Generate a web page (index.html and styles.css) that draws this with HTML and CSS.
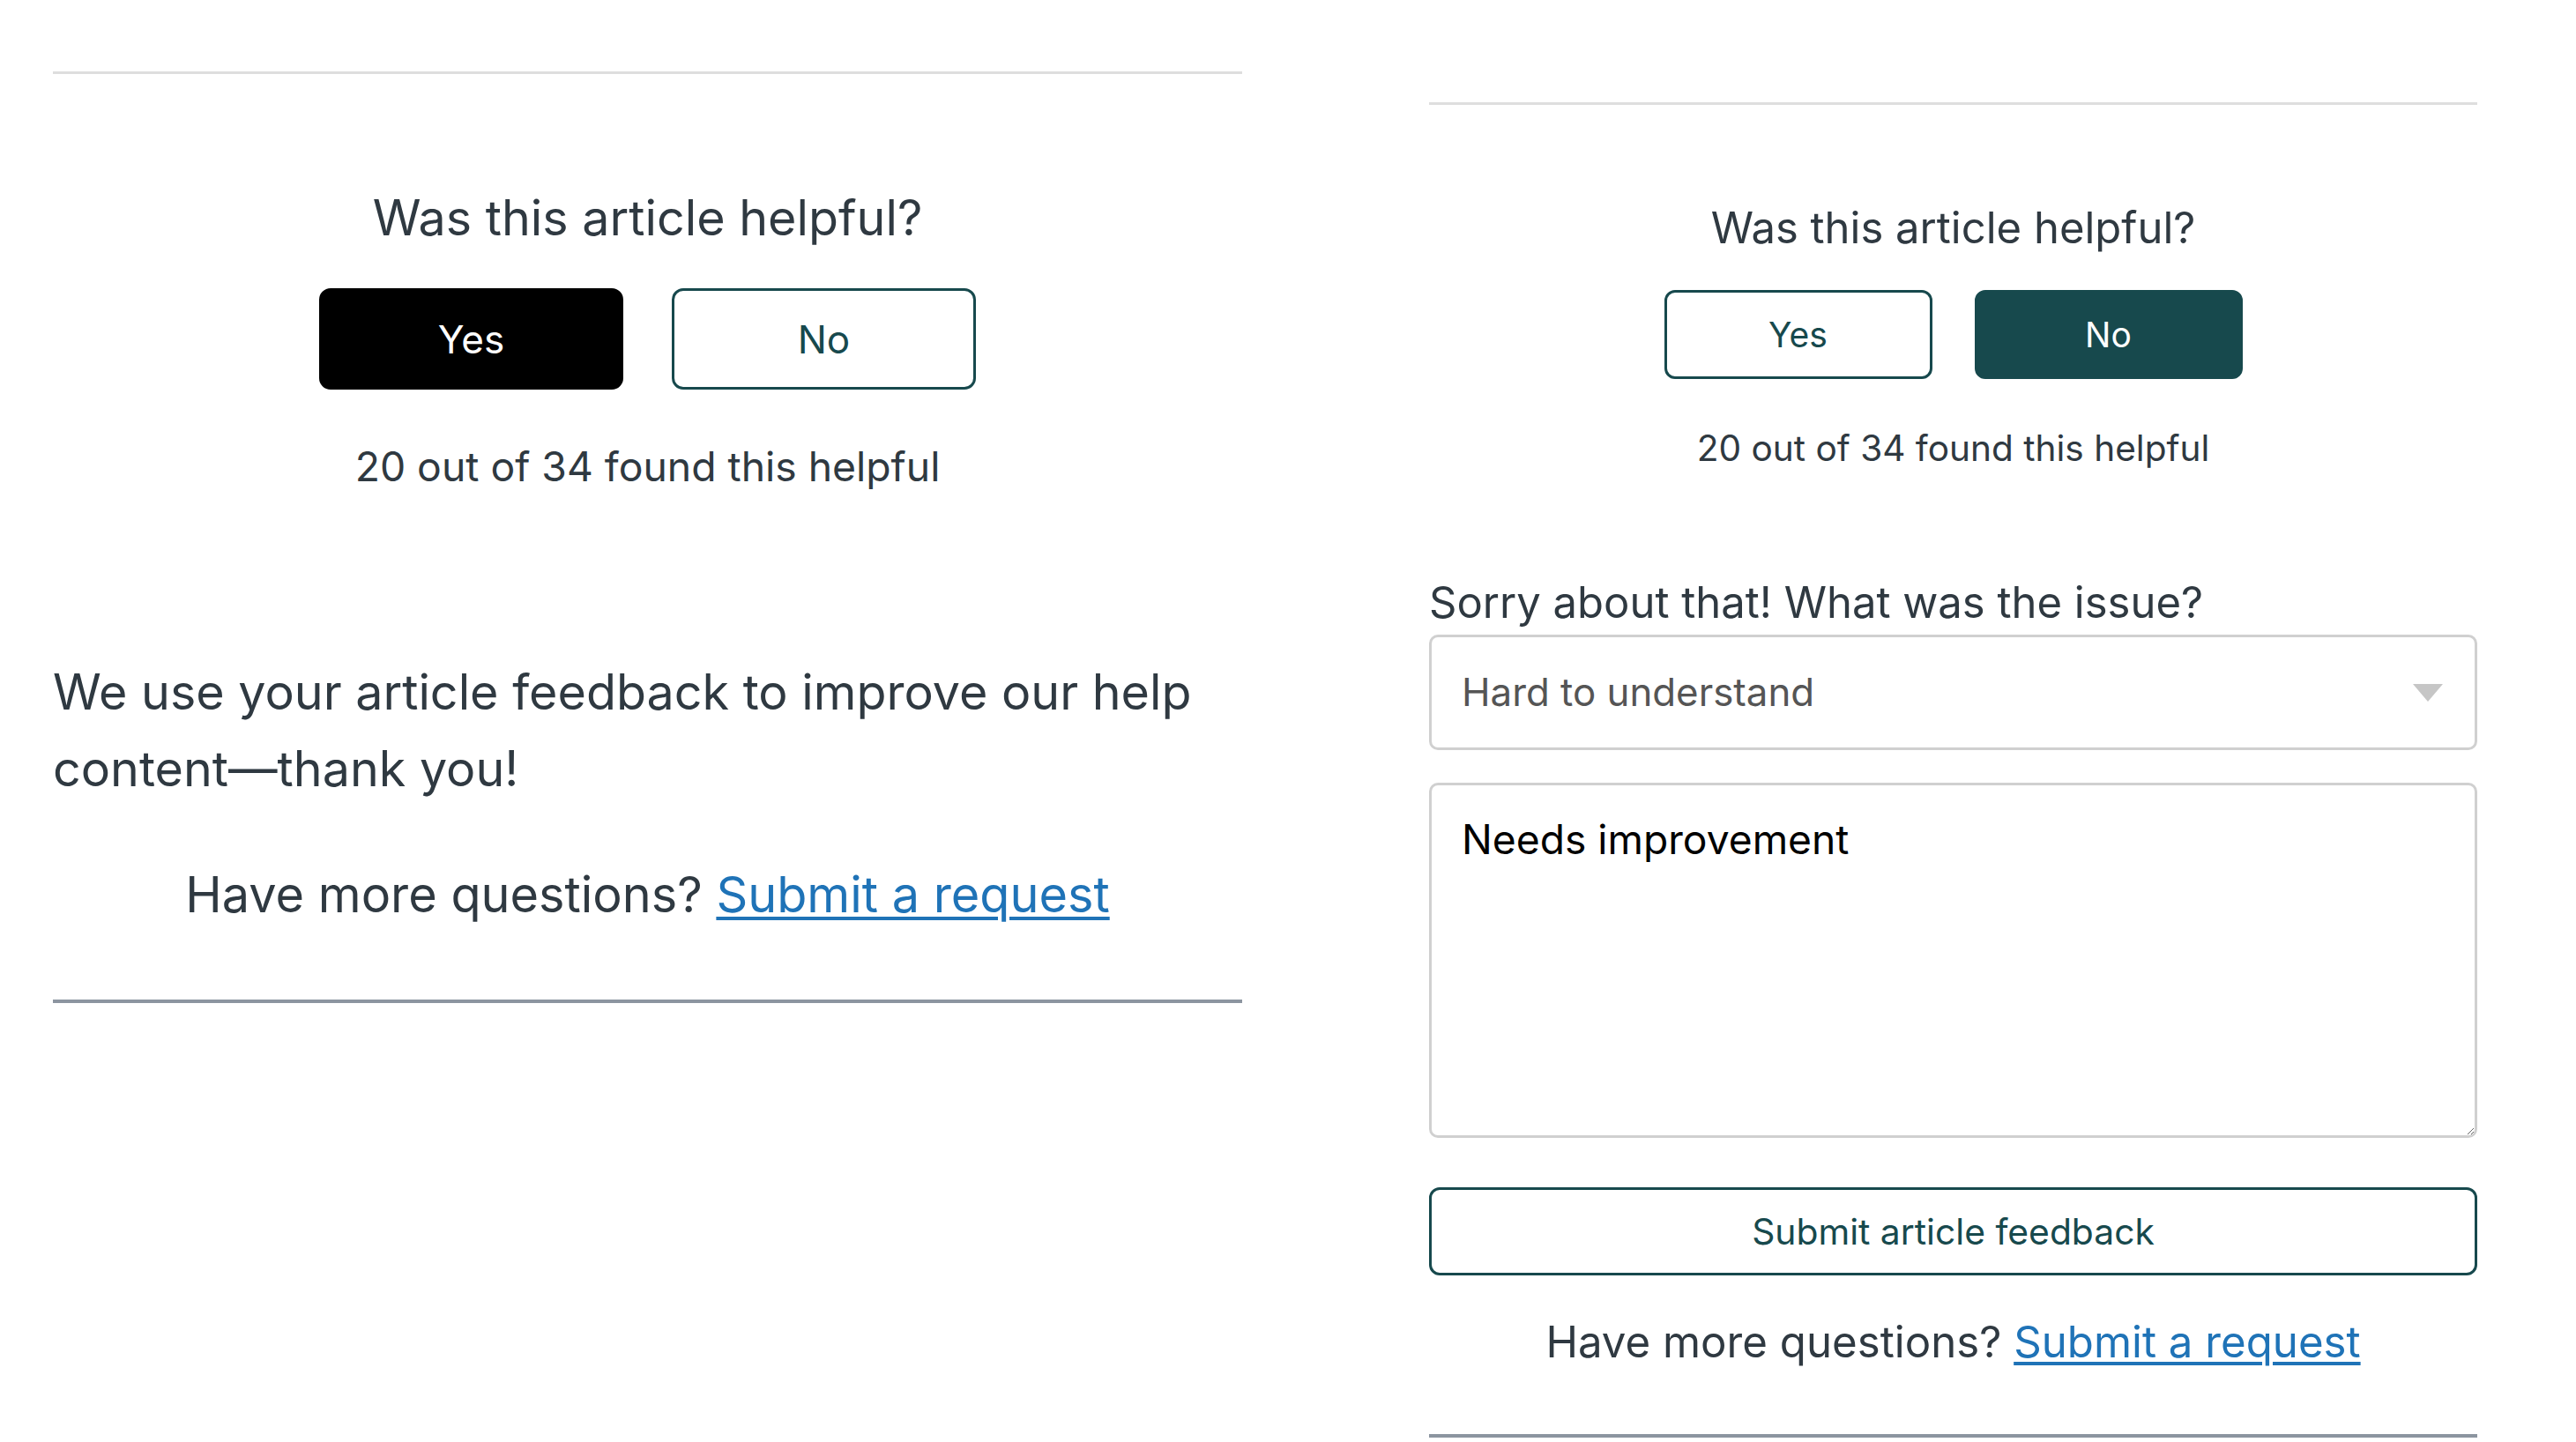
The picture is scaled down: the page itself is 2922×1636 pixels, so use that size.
FILE: index.html
```html
<!DOCTYPE html>
<html lang="en">
<head>
<meta charset="utf-8">
<title>Article feedback</title>
<link rel="stylesheet" href="styles.css">
</head>
<body>
<div class="page">
  <section class="panel panel-thanks">
    <div class="votes">
      <h2 class="votes-question">Was this article helpful?</h2>
      <div class="vote-buttons">
        <button class="vote-btn is-selected-black" type="button">Yes</button>
        <button class="vote-btn" type="button">No</button>
      </div>
      <p class="votes-count">20 out of 34 found this helpful</p>
    </div>
    <p class="thanks">We use your article feedback to improve our help content—thank you!</p>
    <p class="more">Have more questions? <a class="more-link" href="#">Submit a request</a></p>
    <div class="end-rule"></div>
  </section>

  <section class="panel panel-form">
    <div class="votes">
      <h2 class="votes-question">Was this article helpful?</h2>
      <div class="vote-buttons">
        <button class="vote-btn" type="button">Yes</button>
        <button class="vote-btn is-selected" type="button">No</button>
      </div>
      <p class="votes-count">20 out of 34 found this helpful</p>
    </div>
    <form class="feedback-form">
      <label class="issue-label">Sorry about that! What was the issue?</label>
      <div class="select-box">
        <span class="select-value">Hard to understand</span>
        <svg class="select-arrow" width="34" height="20" viewBox="0 0 34 20"><path d="M0 0 H34 L17 20 Z" fill="#c6c6c6"/></svg>
      </div>
      <textarea class="feedback-text">Needs improvement</textarea>
      <button class="submit-btn" type="button">Submit article feedback</button>
    </form>
    <p class="more">Have more questions? <a class="more-link" href="#">Submit a request</a></p>
    <div class="end-rule"></div>
  </section>
</div>
</body>
</html>
```
FILE: styles.css
```css
* { box-sizing: border-box; }
html, body { margin: 0; padding: 0; background: #ffffff; }
body {
  font-family: Inter, "Noto Sans", "Liberation Sans", sans-serif;
  color: #2f3941;
}
.page {
  display: flex;
  align-items: flex-start;
  gap: 212px;
  padding-left: 60px;
}
.panel { display: flex; flex-direction: column; }
.panel-thanks { width: 1349px; margin-top: 81px; }
.panel-form { width: 1189px; margin-top: 116px; }

.votes {
  display: flex;
  flex-direction: column;
  align-items: center;
  border-top: 3px solid #dedede;
}
.votes-question { margin: 0; font-weight: 400; }
.vote-buttons { display: flex; }
.vote-btn {
  font-family: inherit;
  font-weight: 400;
  background: #ffffff;
  color: #17494d;
  border: 3px solid #17494d;
  padding: 0;
  cursor: pointer;
}
.vote-btn.is-selected { background: #17494d; color: #ffffff; }
.vote-btn.is-selected-black { background: #000000; border-color: #000000; color: #ffffff; }
.votes-count { margin: 0; }

/* left panel (larger scale) */
.panel-thanks .votes-question { margin-top: 129px; font-size: 55.6px; line-height: 68px; }
.panel-thanks .vote-buttons { margin-top: 46px; gap: 55px; }
.panel-thanks .vote-btn { width: 345px; height: 115px; border-radius: 13px; font-size: 44px; }
.panel-thanks .votes-count { margin-top: 59px; font-size: 46.3px; line-height: 56px; }
.thanks { margin: 184px 0 0; font-size: 55.6px; line-height: 87px; }
.panel-thanks .more { margin-top: 66px; font-size: 55.8px; line-height: 68px; }
.panel-thanks .end-rule { margin-top: 85px; }

/* right panel */
.panel-form .votes-question { margin-top: 110px; font-size: 49px; line-height: 60px; }
.panel-form .vote-buttons { margin-top: 40px; gap: 48px; }
.panel-form .vote-btn { width: 304px; height: 101px; border-radius: 12px; font-size: 39px; }
.panel-form .votes-count { margin-top: 54px; font-size: 40.6px; line-height: 50px; }

.feedback-form { display: flex; flex-direction: column; }
.issue-label { margin-top: 120px; font-size: 49px; line-height: 60px; }
.select-box {
  margin-top: 6px;
  height: 131px;
  border: 3px solid #d0d0d0;
  border-radius: 10px;
  display: flex;
  align-items: center;
  justify-content: space-between;
  padding: 0 36px 0 34px;
}
.select-value { font-size: 43.8px; color: #555555; }
.select-arrow { display: block; }
.feedback-text {
  margin-top: 37px;
  height: 403px;
  border: 3px solid #d0d0d0;
  border-radius: 10px;
  padding: 31px 34px;
  font-family: inherit;
  font-size: 46.2px;
  line-height: 60px;
  color: #000000;
  resize: vertical;
}
.submit-btn {
  margin-top: 56px;
  height: 100px;
  background: #ffffff;
  border: 3px solid #17494d;
  border-radius: 12px;
  color: #17494d;
  font-family: inherit;
  font-size: 40.8px;
  padding: 0;
}
.more { margin: 0; text-align: center; }
.panel-form .more { margin-top: 45px; font-size: 49.2px; line-height: 60px; }
.more-link {
  color: #1f73b7;
  text-decoration: underline;
  text-decoration-thickness: 4px;
  text-underline-offset: 5px;
}
.end-rule { border-top: 4px solid #8c95a0; }
.panel-form .end-rule { margin-top: 75px; }
```
